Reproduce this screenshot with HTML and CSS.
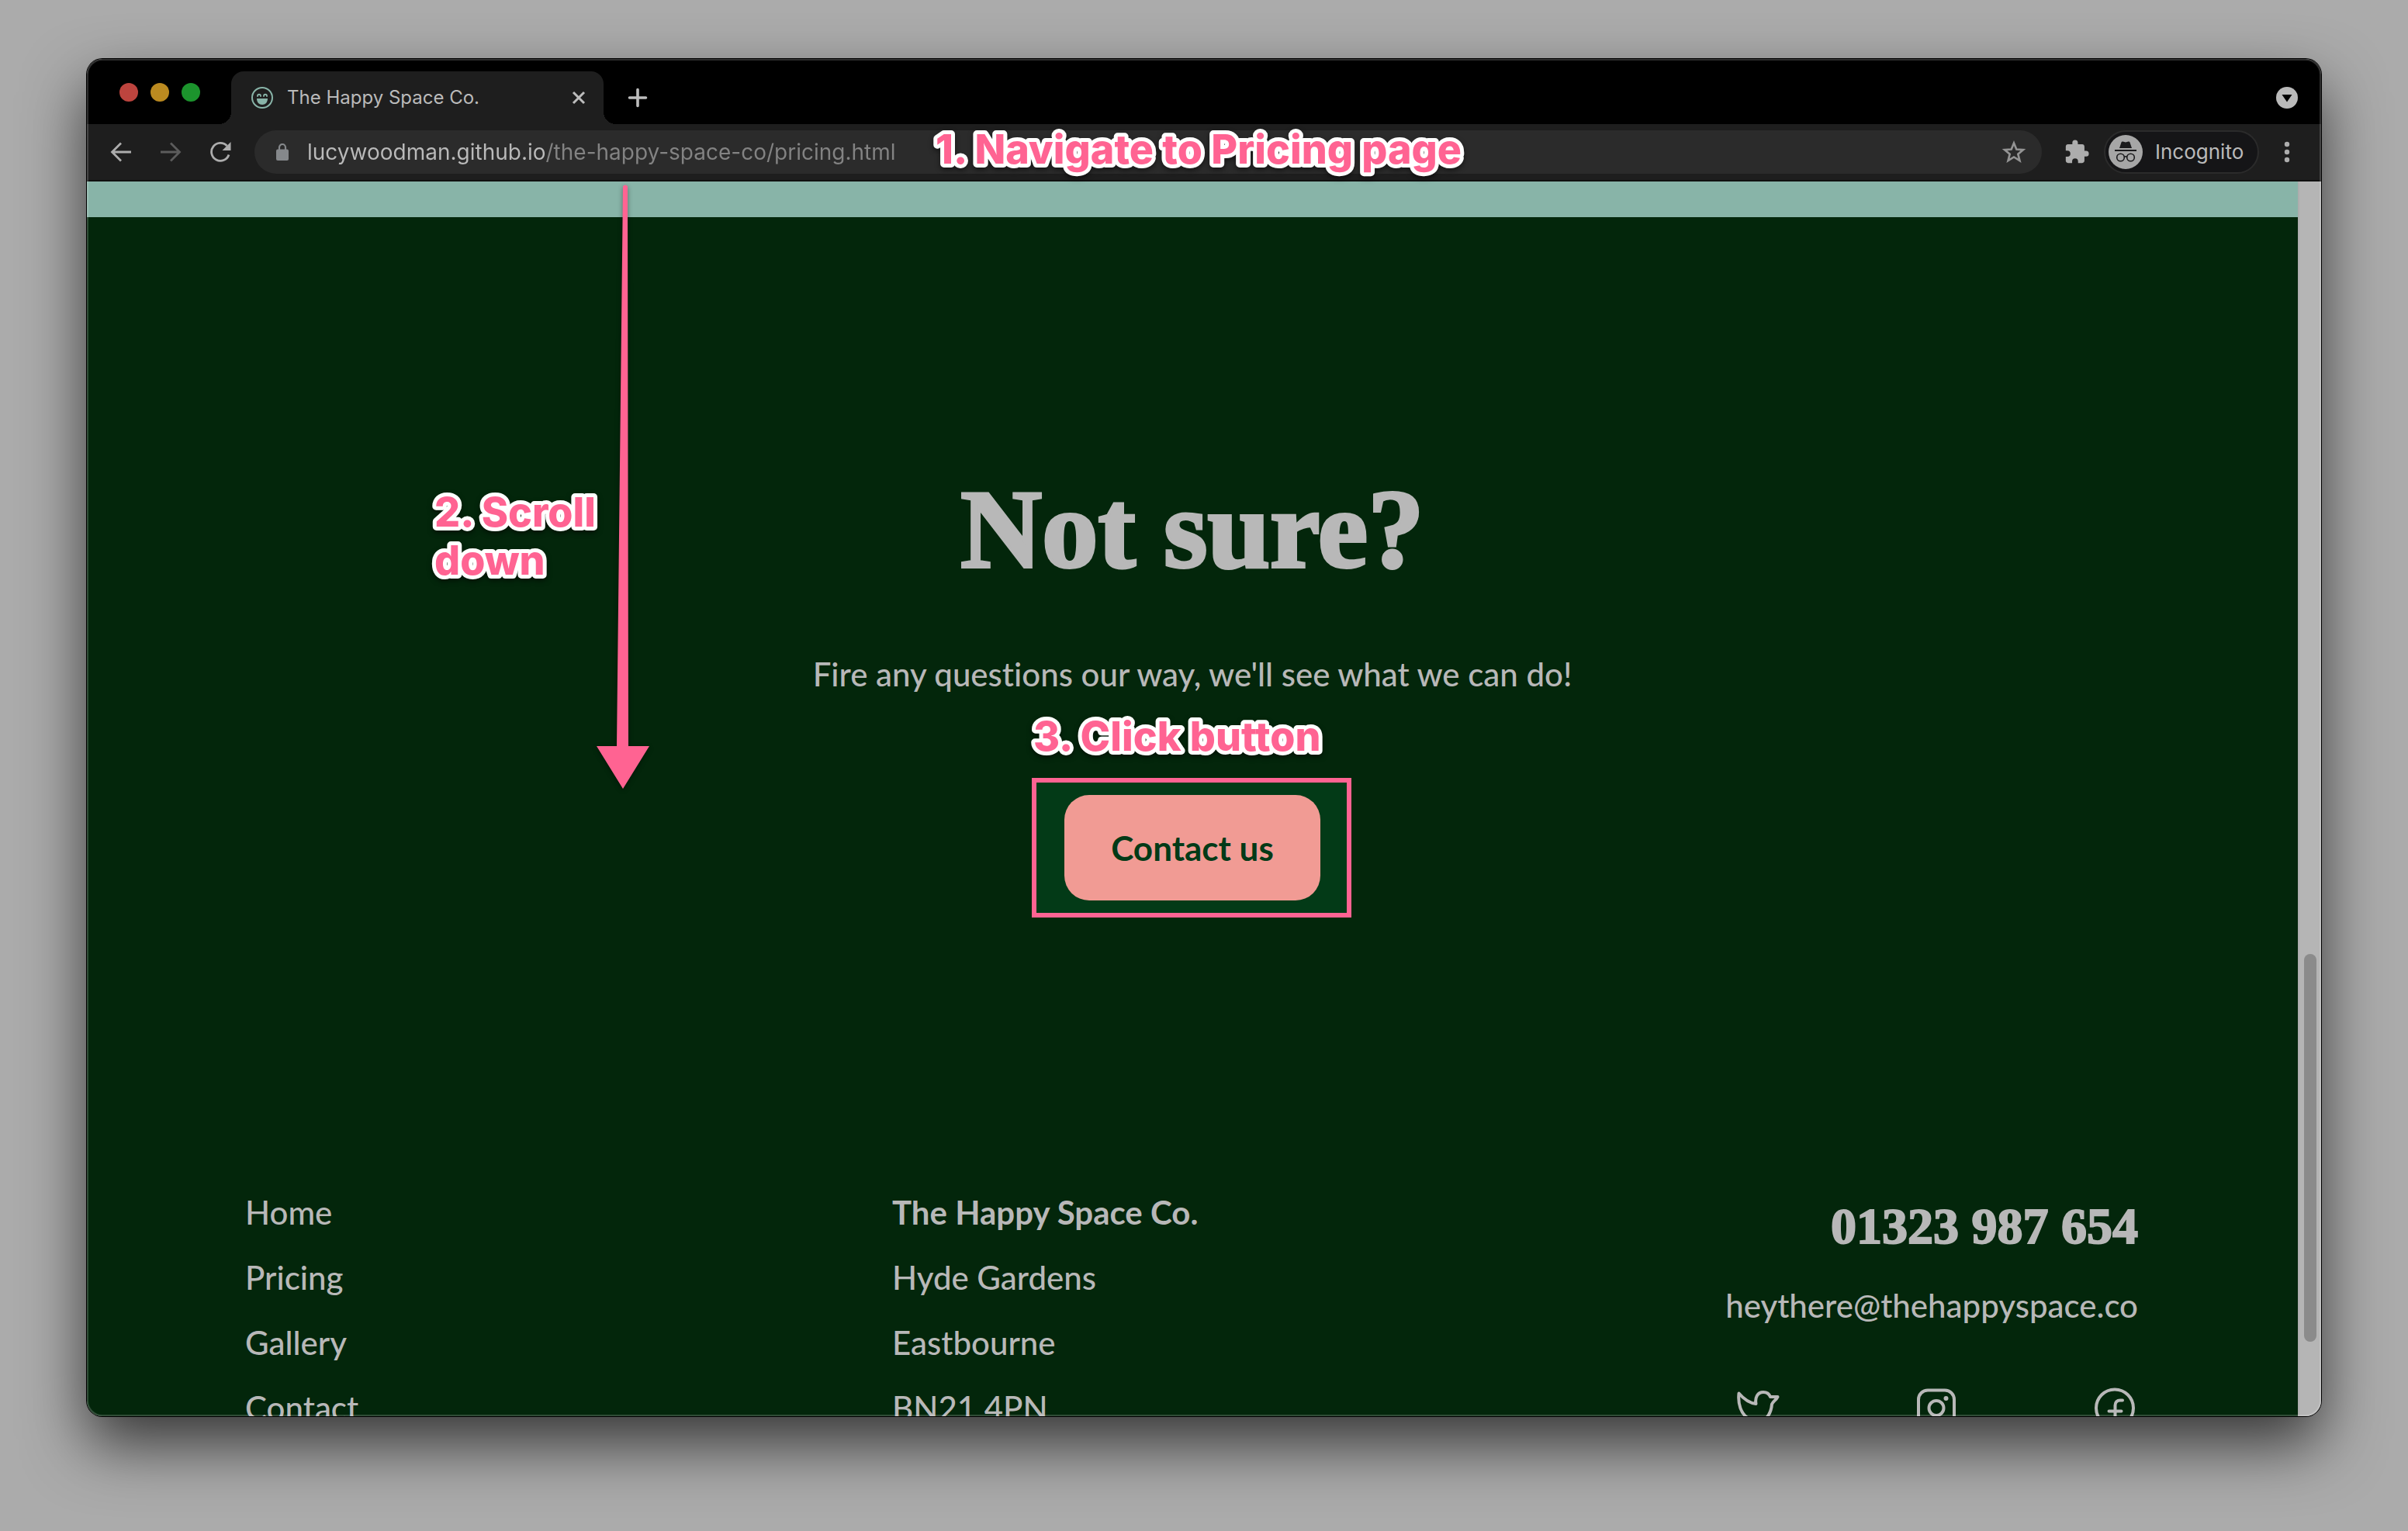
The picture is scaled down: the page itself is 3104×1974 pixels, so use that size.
FILE: index.html
```html
<!DOCTYPE html>
<html lang="en">
<head>
<meta charset="utf-8">
<meta name="viewport" content="width=device-width, initial-scale=1">
<title>The Happy Space Co.</title>
<link rel="stylesheet" href="styles.css">
</head>
<body>
<div class="window">
  <header class="tabstrip">
    <div class="lights">
      <button class="light light-close" aria-label="Close window"></button>
      <button class="light light-min" aria-label="Minimise window"></button>
      <button class="light light-max" aria-label="Zoom window"></button>
    </div>
    <div class="tab">
      <svg class="favicon" viewBox="0 0 28 28" aria-hidden="true"><circle cx="14" cy="14" r="13" fill="none" stroke="#88b4a8" stroke-width="2"/><path d="M7 15h14c0 5-3 8-7 8s-7-3-7-8z" fill="#88b4a8"/><path d="M8 12c0-3 4-3 4 0M16 12c0-3 4-3 4 0" fill="none" stroke="#88b4a8" stroke-width="1.8" stroke-linecap="round"/></svg>
      <span class="tab-title">The Happy Space Co.</span>
      <button class="icon-btn" aria-label="Close tab"><svg width="20" height="20" viewBox="0 0 20 20"><path d="M3 3l14 14M17 3L3 17" stroke="#bdbdbd" stroke-width="3"/></svg></button>
    </div>
    <button class="icon-btn new-tab" aria-label="New tab"><svg width="28" height="28" viewBox="0 0 28 28"><path d="M14 3.500v21M3.500 14h21" stroke="#bdbdbd" stroke-width="3.600" stroke-linecap="round"/></svg></button>
    <button class="icon-btn tab-search" aria-label="Search tabs"><svg width="28" height="28" viewBox="0 0 28 28"><circle cx="14" cy="14" r="14" fill="#bababa"/><path d="M7.500 10h13L14 19.500z" fill="#000"/></svg></button>
  </header>

  <nav class="toolbar" aria-label="Browser">
    <button class="icon-btn nav-btn" aria-label="Back"><svg width="28" height="28" viewBox="0 0 28 28"><path d="M27 14H3M14 2.500L2.500 14 14 25.500" fill="none" stroke="#adadad" stroke-width="2.800"/></svg></button>
    <button class="icon-btn nav-btn" aria-label="Forward"><svg width="28" height="28" viewBox="0 0 28 28"><path d="M1 14h24M14 2.500L25.500 14 14 25.500" fill="none" stroke="#5c5c5c" stroke-width="2.800"/></svg></button>
    <button class="icon-btn nav-btn" aria-label="Reload"><svg width="28" height="28" viewBox="0 0 28 28"><path d="M25 17.500A11.500 11.500 0 1 1 22.500 6" fill="none" stroke="#adadad" stroke-width="2.800"/><path d="M27.500 1v11h-11z" fill="#adadad"/></svg></button>
    <div class="omnibox">
      <svg class="lock" width="16" height="22" viewBox="0 0 16 22" aria-hidden="true"><rect x="0" y="7.500" width="16" height="14.500" rx="2" fill="#85888b"/><path d="M4 9V5a4 4 0 0 1 8 0v4" fill="none" stroke="#85888b" stroke-width="2.200"/></svg>
      <input class="url" type="text" aria-label="Address" value="lucywoodman.github.io/the-happy-space-co/pricing.html">
      <button class="icon-btn" aria-label="Bookmark"><svg width="32" height="32" viewBox="0 0 32 32"><path d="M16 4.500l3.300 8 8.700.6-6.700 5.600 2.200 8.400L16 22.500l-7.500 4.600 2.200-8.400L4 13.100l8.700-.6z" fill="none" stroke="#949494" stroke-width="2.600"/></svg></button>
    </div>
    <button class="icon-btn extensions" aria-label="Extensions"><svg width="34" height="34" viewBox="0 0 24 24"><path d="M20.500 11H19V7c0-1.100-.9-2-2-2h-4V3.500a2.500 2.500 0 0 0-5 0V5H4c-1.100 0-2 .9-2 2v3.800h1.500a2.700 2.700 0 0 1 0 5.400H2V20c0 1.100.9 2 2 2h3.800v-1.500a2.700 2.700 0 0 1 5.400 0V22H17c1.100 0 2-.9 2-2v-4h1.500a2.500 2.500 0 0 0 0-5z" fill="#adadad"/></svg></button>
    <button class="profile">
      <svg width="44" height="44" viewBox="0 0 44 44" aria-hidden="true"><circle cx="22" cy="22" r="22" fill="#a6a6a6"/><path d="M14 17l2.500-7.500q.5-1.500 2-1l3.500 1 3.500-1q1.500-.5 2 1L30 17z" fill="#1b1b1d"/><path d="M8 20h28" stroke="#1b1b1d" stroke-width="2"/><circle cx="15.500" cy="29" r="4.800" fill="none" stroke="#1b1b1d" stroke-width="1.600"/><circle cx="28.500" cy="29" r="4.800" fill="none" stroke="#1b1b1d" stroke-width="1.600"/><path d="M20 28.500q2-1.500 4 0" fill="none" stroke="#1b1b1d" stroke-width="1.600"/></svg>
      <span>Incognito</span>
    </button>
    <button class="icon-btn menu" aria-label="Menu"><svg width="8" height="28" viewBox="0 0 8 28"><g fill="#adadad"><circle cx="4" cy="4" r="3.200"/><circle cx="4" cy="14" r="3.200"/><circle cx="4" cy="24" r="3.200"/></g></svg></button>
  </nav>

  <div class="viewport">
    <div class="page">
      <div class="band"></div>
      <main class="cta">
        <h1 class="cta-title">Not sure?</h1>
        <p class="cta-text">Fire any questions our way, we'll see what we can do!</p>
        <div class="cta-action">
          <div class="frame"></div>
          <button class="contact-btn">Contact us</button>
          <svg class="note note-click" width="420" height="80"><text x="8" y="56">3. Click button</text></svg>
        </div>
      </main>
      <footer class="footer">
        <ul class="links">
          <li><a href="#home">Home</a></li>
          <li><a href="#pricing">Pricing</a></li>
          <li><a href="#gallery">Gallery</a></li>
          <li><a href="#contact">Contact</a></li>
        </ul>
        <address class="address">
          <strong>The Happy Space Co.</strong>
          <span>Hyde Gardens</span>
          <span>Eastbourne</span>
          <span>BN21 4PN</span>
        </address>
        <div class="reach">
          <a class="phone" href="tel:01323987654">01323 987 654</a>
          <a href="mailto:heythere@thehappyspace.co">heythere@thehappyspace.co</a>
          <div class="social">
            <a href="#twitter" aria-label="Twitter"><svg viewBox="0 0 60 60"><path d="M5.500 11.500c6 7 13 12.500 22 13.500-1.500-8 2-15 9.500-15 4.500 0 7.500 2 9 6h9.500c-2 4-6 6-7.500 9.500C47 39 38 52 21 52c-7 0-11-1.500-15-4 5 0 9-1.500 12-4C8 38 4 25 5.500 11.500z"/></svg></a>
            <a href="#instagram" aria-label="Instagram"><svg viewBox="0 0 60 60"><rect x="7" y="7.500" width="46" height="46" rx="12"/><circle cx="30" cy="30.500" r="9.500"/><circle class="dot" cx="42.500" cy="18" r="3"/></svg></a>
            <a href="#facebook" aria-label="Facebook"><svg viewBox="0 0 60 60"><circle cx="30" cy="30.500" r="24"/><path d="M40 20.500h-3c-4 0-6.500 2.500-6.500 6.500v27M22.500 34.500h16"/></svg></a>
          </div>
        </div>
      </footer>
    </div>
    <div class="scrollbar"><div class="thumb"></div></div>
  </div>

  <svg class="note note-nav" width="720" height="80"><text x="8" y="56">1. Navigate to Pricing page</text></svg>
  <svg class="note note-scroll" width="240" height="140"><text x="8" y="56">2. Scroll<tspan x="8" y="118">down</tspan></text></svg>
  <svg class="arrow" width="70" height="780" viewBox="0 0 70 780" aria-hidden="true"><path d="M35 2q3-3 6 0L42 724h27L35 779 1 724h26z" fill="#ff6392"/></svg>
</div>
</body>
</html>
```
FILE: styles.css
```css
* { box-sizing: border-box; }

body {
  margin: 0;
  height: 100vh;
  padding: 76px 112px 148px;
  overflow: hidden;
  background: #ababab;
  font-family: Lato, sans-serif;
  font-size: 42px;
  font-weight: 500;
  line-height: 84px;
  font-variant-ligatures: none;
  color: #b8b8b8;
}

a { color: inherit; text-decoration: none; }
button { font: inherit; color: inherit; border: 0; padding: 0; cursor: pointer; }
svg { display: block; }

.icon-btn { display: flex; align-items: center; justify-content: center; background: none; }

.window {
  position: relative;
  display: flex;
  flex-direction: column;
  height: 100%;
  border-radius: 20px;
  box-shadow: 0 0 0 1px #000, 0 36px 80px rgba(0, 0, 0, .68);
}

.window::after {
  content: "";
  position: absolute;
  inset: 0;
  border: 2px solid rgba(255, 255, 255, .18);
  border-radius: 20px;
  pointer-events: none;
}

/* Tab strip */
.tabstrip {
  flex: none;
  display: flex;
  align-items: flex-end;
  height: 84px;
  padding: 0 30px 0 42px;
  background: #000;
  border-radius: 20px 20px 0 0;
}

.lights { display: flex; gap: 16px; margin-right: 40px; padding-bottom: 29px; }
.light { width: 24px; height: 24px; border-radius: 50%; }
.light-close { background: #bd443e; }
.light-min { background: #bb8a20; }
.light-max { background: #1c942d; }

.tab {
  position: relative;
  display: flex;
  align-items: center;
  width: 480px;
  height: 68px;
  padding: 0 22px 0 26px;
  background: #1e1e1e;
  border-radius: 16px 16px 0 0;
}

.tab::before,
.tab::after {
  content: "";
  position: absolute;
  bottom: 0;
  width: 16px;
  height: 16px;
}

.tab::before { right: 100%; background: radial-gradient(circle at 0 0, #000 16px, #1e1e1e 16px); }
.tab::after { left: 100%; background: radial-gradient(circle at 100% 0, #000 16px, #1e1e1e 16px); }

.favicon { width: 28px; height: 28px; margin-right: 18px; }
.tab-title { flex: 1; font: 24px/32px Inter, sans-serif; color: #bababa; }
.new-tab { margin-left: 30px; height: 68px; }
.tab-search { margin-left: auto; height: 68px; }

/* Toolbar */
.toolbar {
  flex: none;
  display: flex;
  align-items: center;
  height: 74px;
  padding: 0 40px 0 30px;
  background: #1e1e1e;
  border-bottom: 2px solid #101010;
  font: 26px/32px Inter, sans-serif;
}

.nav-btn { width: 28px; margin-right: 36px; }
.nav-btn + .nav-btn + .nav-btn { margin-right: 30px; }

.omnibox {
  flex: 1;
  display: flex;
  align-items: center;
  height: 56px;
  padding: 0 20px 0 28px;
  background: #2b2b2b;
  border-radius: 28px;
}

.lock { margin-right: 24px; }

.url {
  flex: 1;
  min-width: 0;
  border: 0;
  padding: 0;
  font: 28px/40px Inter, sans-serif;
  color: transparent;
  background: linear-gradient(90deg, #bababa 307px, #838383 307px);
  -webkit-background-clip: text;
  background-clip: text;
}

.extensions { margin: 0 18px 0 28px; }

.profile {
  display: flex;
  align-items: center;
  gap: 16px;
  width: 200px;
  height: 56px;
  padding: 0 4px;
  background: #151517;
  border: 2px solid #2b2b2b;
  border-radius: 28px;
  color: #bababa;
}

.menu { margin-left: 32px; }

/* Web page */
.viewport {
  flex: 1;
  min-height: 0;
  display: flex;
  overflow: hidden;
  border-radius: 0 0 20px 20px;
}

.page { flex: 1; overflow: hidden; background: #03260b; }
.band { height: 46px; background: #88b4a8; }

.scrollbar {
  width: 30px;
  padding: 996px 6px 0;
  background: #b5b5b5;
  border-left: 2px solid #adadad;
}

.thumb { height: 500px; border-radius: 8px; background: #8b8b8b; }

.cta {
  display: flex;
  flex-direction: column;
  align-items: center;
  padding: 314px 40px 360px;
}

.cta-title {
  margin: 0 0 57px;
  font: bold 145px/176px "Liberation Serif", serif;
  -webkit-text-stroke: 4px #b8b8b8;
}

.cta-text { margin: 0 0 114px; }

.cta-action { position: relative; }

.frame {
  position: absolute;
  inset: -22px -40px -22px -42px;
  background: #033a17;
  border: 6px solid #ff6392;
}

.contact-btn {
  position: relative;
  display: block;
  height: 136px;
  padding: 0 60px;
  background: #f19b94;
  border-radius: 32px;
  font-size: 44px;
  font-weight: bold;
  color: #033a17;
}

.footer {
  display: grid;
  grid-template-columns: 834px 1fr auto;
  padding: 0 206px 0 204px;
}

.links { margin: 0; padding: 0; list-style: none; }
.address { display: flex; flex-direction: column; font-style: normal; }

.reach {
  display: flex;
  flex-direction: column;
  gap: 18px;
  padding-top: 18px;
  text-align: right;
}

.phone { font: bold 66px/84px "Liberation Serif", serif; -webkit-text-stroke: 2px #b8b8b8; }

.social { display: flex; justify-content: space-between; padding: 42px 0 0 12px; }
.social svg { width: 60px; height: 60px; fill: none; stroke: #b8b8b8; stroke-width: 4; stroke-linecap: round; stroke-linejoin: round; }
.social .dot { fill: #b8b8b8; stroke: none; }

/* Annotations laid over the window */
.note {
  position: absolute;
  z-index: 2;
  overflow: visible;
  font: 800 52px/62px Inter, sans-serif;
  fill: #ff6392;
  stroke: #fff;
  stroke-width: 10px;
  stroke-linejoin: round;
  paint-order: stroke fill;
  filter: drop-shadow(0 3px 3px rgba(0, 0, 0, .5));
}

.note-nav { left: 1086px; top: 79px; }
.note-scroll { left: 440px; top: 547px; }
.note-click { left: -48px; bottom: 169px; }

.arrow {
  position: absolute;
  left: 656px;
  top: 162px;
  z-index: 2;
  filter: drop-shadow(0 2px 3px rgba(0, 0, 0, .4));
}
```
